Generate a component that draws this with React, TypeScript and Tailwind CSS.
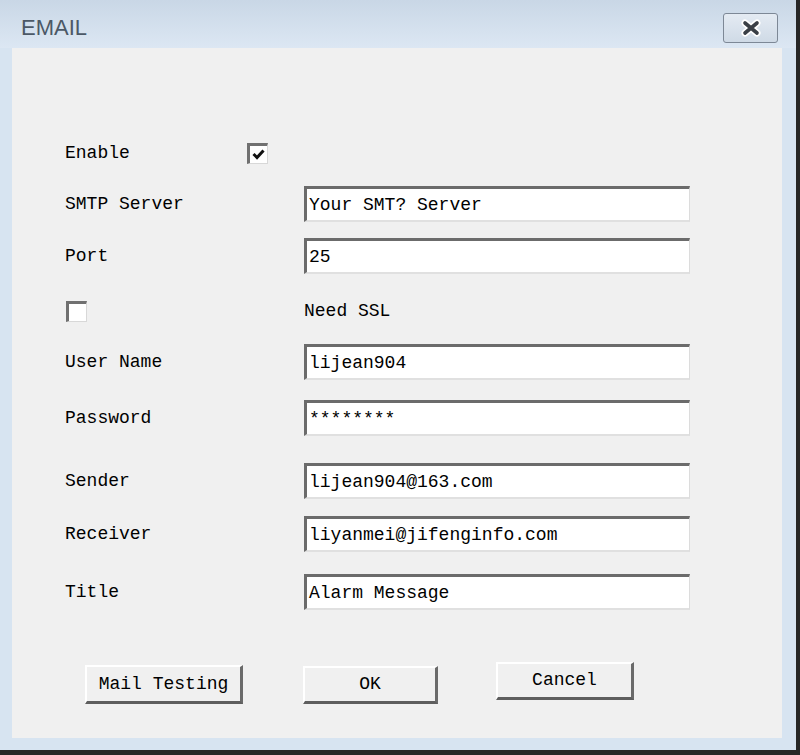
import React from 'react';

const mono = "font-['Liberation_Mono','Courier_New',monospace] text-[18px] text-black";

function Field({ value }: { value: string }) {
    return (
        <div className="w-[386px] h-[36px] bg-white border-t-[3px] border-l-[3px] border-r border-b-2 border-t-[#6b6b6b] border-l-[#6b6b6b] border-r-[#dcdcdc] border-b-[#e0e0e0] flex items-center pl-[2px]">
            <span className={`${mono} leading-none whitespace-pre`}>{value}</span>
        </div>
    );
}

function Check({ checked }: { checked?: boolean }) {
    return (
        <div className="w-[21px] h-[21px] bg-white border-t-[3px] border-l-[3px] border-r border-b border-t-[#707070] border-l-[#707070] border-r-[#d8d8d8] border-b-[#d8d8d8] flex items-center justify-center">
            {checked && (
                <svg width="13" height="11" viewBox="0 0 13 11">
                    <path d="M1.5 5 L5 8.5 L11.5 1.5" fill="none" stroke="#111" strokeWidth="3" />
                </svg>
            )}
        </div>
    );
}

function Row({ label, value, className }: { label: string; value: string; className?: string }) {
    return (
        <div className={`flex items-center h-[36px] ${className ?? ''}`}>
            <div className={`w-[239px] ${mono}`}>{label}</div>
            <Field value={value} />
        </div>
    );
}

function Btn({ label, className }: { label: string; className: string }) {
    return (
        <button
            className={`bg-[#f0f0f0] border-t-2 border-l-2 border-b-[3px] border-r-[3px] border-t-white border-l-white border-b-[#5e5e5e] border-r-[#6a6a6a] flex items-center justify-center ${mono} ${className}`}
        >
            {label}
        </button>
    );
}

export default function App() {
    return (
        <div className="w-[800px] h-[755px] bg-[#262626]">
            <div className="w-[796px] h-[750px] bg-[#d7e4f1] flex flex-col">
                {/* title bar */}
                <div className="h-[48px] bg-gradient-to-b from-[#c9d7e6] to-[#dce7f3] flex items-center justify-between pt-[8px] pl-[21px] pr-[18px]">
                    <span className="font-['Liberation_Sans',Arial,sans-serif] text-[22px] text-[#4b5866] leading-none">EMAIL</span>
                    <div className="w-[55px] h-[30px] rounded-[3px] border border-[#7d8896] bg-gradient-to-b from-[#e4ebf3] to-[#cfdae6] flex items-center justify-center">
                        <svg width="24" height="18" viewBox="0 0 24 18">
                            <path d="M6 4 L18 14 M18 4 L6 14" stroke="#fff" strokeWidth="7" strokeLinecap="round" />
                            <path d="M6 4 L18 14 M18 4 L6 14" stroke="#3a3f46" strokeWidth="3.6" strokeLinecap="round" />
                        </svg>
                    </div>
                </div>

                {/* body */}
                <div className="flex-1 ml-[12px] mr-[14px] mb-[12px] bg-[#f0f0f0] pl-[53px] flex flex-col">
                    <div className="flex items-center h-[36px] mt-[87px]">
                        <div className={`w-[182px] ${mono}`}>Enable</div>
                        <Check checked />
                    </div>
                    <Row label="SMTP Server" value="Your SMT? Server" className="mt-[15px]" />
                    <Row label="Port" value="25" className="mt-[16px]" />
                    <div className="flex items-center h-[36px] mt-[19px]">
                        <div className="w-[239px] pl-[1px]">
                            <Check />
                        </div>
                        <span className={mono}>Need SSL</span>
                    </div>
                    <Row label="User Name" value="lijean904" className="mt-[15px]" />
                    <Row label="Password" value="********" className="mt-[20px]" />
                    <Row label="Sender" value="lijean904@163.com" className="mt-[27px]" />
                    <Row label="Receiver" value="liyanmei@jifenginfo.com" className="mt-[17px]" />
                    <Row label="Title" value="Alarm Message" className="mt-[22px]" />

                    <div className="flex items-start mt-[52px]">
                        <Btn label="Mail Testing" className="ml-[20px] mt-[3px] w-[158px] h-[39px]" />
                        <Btn label="OK" className="ml-[60px] mt-[4px] w-[135px] h-[38px]" />
                        <Btn label="Cancel" className="ml-[58px] w-[138px] h-[38px]" />
                    </div>
                </div>
            </div>
        </div>
    );
}
